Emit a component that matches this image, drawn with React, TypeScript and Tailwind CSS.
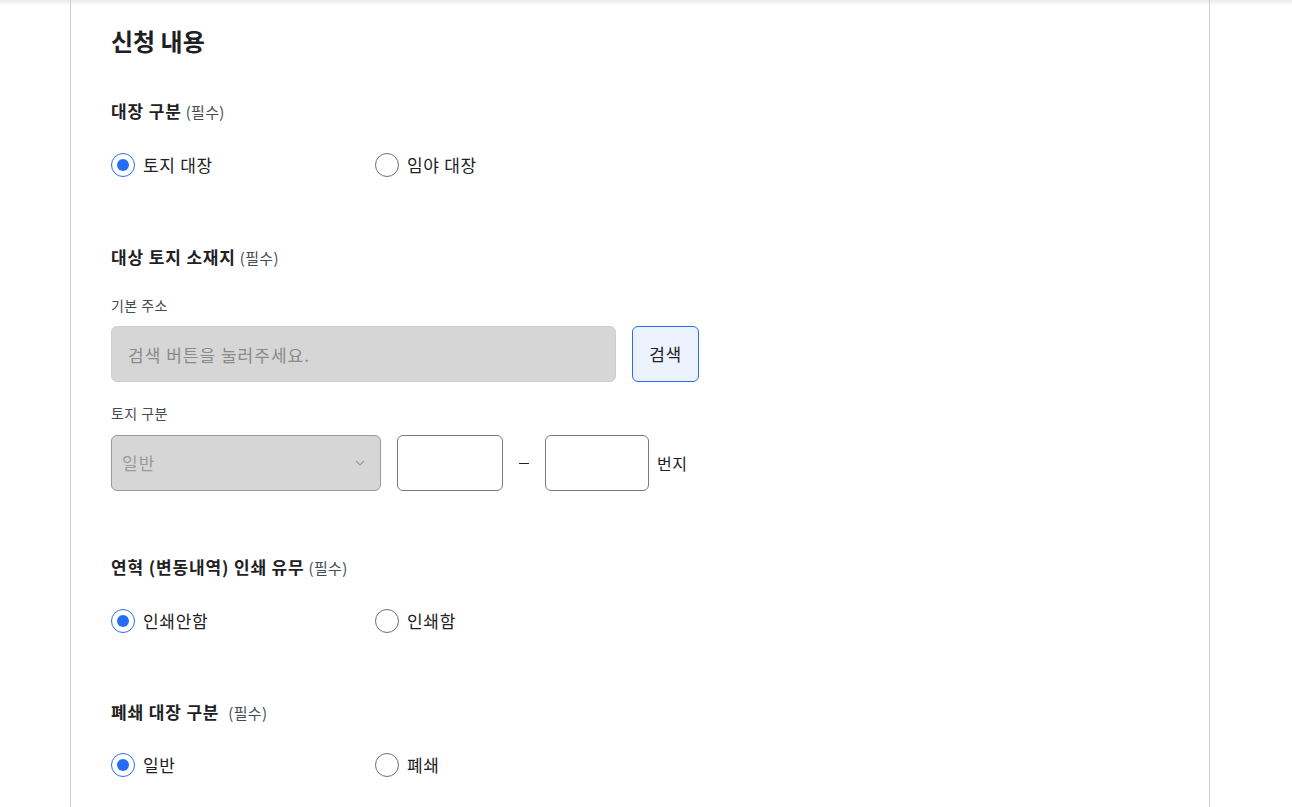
import { useState } from "react";

type Option = { value: string; label: string };

function RadioGroup({
  name,
  options,
  initial,
}: {
  name: string;
  options: Option[];
  initial: string;
}) {
  const [value, setValue] = useState(initial);
  return (
    <div className="flex">
      {options.map((opt) => {
        const checked = value === opt.value;
        return (
          <label
            key={opt.value}
            className="flex w-[264px] cursor-pointer items-center gap-[8px]"
            onClick={() => setValue(opt.value)}
          >
            <span
              className={`flex h-[24px] w-[24px] items-center justify-center rounded-full border ${
                checked ? "border-[#256ef4]" : "border-[#6d6d6d]"
              }`}
            >
              {checked && <span className="h-[12px] w-[12px] rounded-full bg-[#256ef4]" />}
            </span>
            <input type="radio" name={name} className="hidden" readOnly checked={checked} />
            <span className="text-[17px] leading-[24px] tracking-[0.04em] text-[#1e2124]">{opt.label}</span>
          </label>
        );
      })}
    </div>
  );
}

function SectionLabel({ title, spaced }: { title: string; spaced?: boolean }) {
  return (
    <h3 className="text-[17px] font-bold leading-[24px] tracking-[0.05em] text-[#1e2124]">
      {title}
      <span
        className={`text-[15px] font-normal tracking-[0.02em] text-[#464c53] ${
          spaced ? "ml-[9px]" : "ml-[4px]"
        }`}
      >
        (필수)
      </span>
    </h3>
  );
}

export default function App() {
  return (
    <main
      className="min-h-screen bg-white"
      style={{ fontFamily: '"Noto Sans CJK KR", "Noto Sans", sans-serif' }}
    >
      <div className="h-[6px] bg-gradient-to-b from-[#ececec] to-white" />
      <div className="ml-[70px] -mt-[6px] w-[1140px] border-x border-[#cdcdcd] pl-[40px] pb-[40px]">
        <h2 className="pt-[25px] text-[24px] font-bold leading-[32px] text-[#1e2124]">신청 내용</h2>

        {/* 대장 구분 */}
        <div className="mt-[42px]">
          <SectionLabel title="대장 구분" />
          <div className="mt-[29px]">
            <RadioGroup
              name="ledger"
              initial="land"
              options={[
                { value: "land", label: "토지 대장" },
                { value: "forest", label: "임야 대장" },
              ]}
            />
          </div>
        </div>

        {/* 대상 토지 소재지 */}
        <div className="mt-[68px]">
          <SectionLabel title="대상 토지 소재지" />
          <p className="mt-[25px] text-[14px] leading-[20px] tracking-[0.03em] text-[#464c53]">기본 주소</p>
          <div className="mt-[11px] flex gap-[16px]">
            <input
              disabled
              placeholder="검색 버튼을 눌러주세요."
              className="h-[56px] w-[505px] rounded-[6px] border border-[#cdcdcd] bg-[#d6d6d6] px-[16px] text-[17px] tracking-[0.06em] placeholder:text-[#8a8a8a]"
            />
            <button className="h-[56px] w-[67px] rounded-[6px] border border-[#256ef4] bg-[#ecf2fe] text-[17px] tracking-[0.04em] text-[#1e2124]">
              검색
            </button>
          </div>

          <p className="mt-[21px] text-[14px] leading-[20px] tracking-[0.03em] text-[#464c53]">토지 구분</p>
          <div className="mt-[12px] flex items-center">
            <div className="flex h-[56px] w-[270px] items-center justify-between rounded-[6px] border border-[#9a9a9a] bg-[#d6d6d6] pl-[10px] pr-[14px]">
              <span className="text-[17px] tracking-[0.06em] text-[#9a9a9a]">일반</span>
              <svg width="12" height="12" viewBox="0 0 12 12" fill="none">
                <path d="M2 4l4 4 4-4" stroke="#9a9a9a" strokeWidth="1.2" />
              </svg>
            </div>
            <input className="ml-[16px] h-[56px] w-[106px] rounded-[6px] border border-[#7a7a7a] bg-white" />
            <span className="mx-[16px] h-px w-[10px] bg-[#1e2124]" />
            <input className="h-[56px] w-[104px] rounded-[6px] border border-[#7a7a7a] bg-white" />
            <span className="ml-[8px] text-[16px] tracking-[0.03em] text-[#1e2124]">번지</span>
          </div>
        </div>

        {/* 연혁 인쇄 유무 */}
        <div className="mt-[64px]">
          <SectionLabel title="연혁 (변동내역) 인쇄 유무" />
          <div className="mt-[29px]">
            <RadioGroup
              name="history"
              initial="no"
              options={[
                { value: "no", label: "인쇄안함" },
                { value: "yes", label: "인쇄함" },
              ]}
            />
          </div>
        </div>

        {/* 폐쇄 대장 구분 */}
        <div className="mt-[67px]">
          <SectionLabel title="폐쇄 대장 구분" spaced />
          <div className="mt-[28px]">
            <RadioGroup
              name="closed"
              initial="normal"
              options={[
                { value: "normal", label: "일반" },
                { value: "closed", label: "폐쇄" },
              ]}
            />
          </div>
        </div>
      </div>
    </main>
  );
}
